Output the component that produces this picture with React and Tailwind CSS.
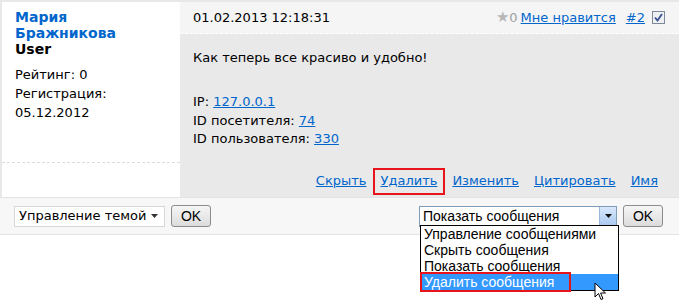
import React from "react";

const Link = ({ children, className = "" }) => (
  <a href="#" className={`text-[#0066cc] underline ${className}`}>
    {children}
  </a>
);

const App = () => {
  const options = [
    "Управление сообщениями",
    "Скрыть сообщения",
    "Показать сообщения",
    "Удалить сообщения",
  ];

  return (
    <div className="relative w-[679px] h-[301px] bg-white text-[13px] text-black font-['DejaVu_Sans',sans-serif] overflow-hidden">
      {/* Post */}
      <div className="flex h-[197px] border-t-2 border-l-2 border-[#e8e8e8]">
        {/* Author */}
        <div className="w-[178px] flex flex-col bg-white">
          <div className="h-[161px] border-b border-dashed border-[#dcdcdc] pl-[13px] pt-[7px]">
            <div className="text-[#0066cc] font-bold text-[14px] leading-[16px]">
              Мария
              <br />
              Бражникова
            </div>
            <div className="font-bold text-[14px] leading-[16px]">User</div>
            <div className="mt-[8px] leading-[19px]">
              <div>Рейтинг: 0</div>
              <div>Регистрация:</div>
              <div>05.12.2012</div>
            </div>
          </div>
        </div>

        {/* Message */}
        <div className="flex-1 flex flex-col">
          <div className="h-[32px] flex items-center bg-[#f5f5f5] border-b border-dashed border-white pl-[13px] pr-[14px]">
            <span className="flex-1">01.02.2013 12:18:31</span>
            <span className="text-[#b8b8b8] text-[15px] leading-none">★</span>
            <span className="text-[#a0a0a0]">0</span>
            <Link className="ml-[3px]">Мне нравится</Link>
            <Link className="ml-[10px]">#2</Link>
            <span className="ml-[7px] w-[13px] h-[13px] border border-[#7f8a99] bg-[#eef0f4] flex items-center justify-center">
              <svg width="9" height="9" viewBox="0 0 9 9">
                <path d="M1 4.5 L3.5 7.5 L8 1" fill="none" stroke="#3a4f8f" strokeWidth="1.8" />
              </svg>
            </span>
          </div>
          <div className="flex-1 bg-[#e9e9e9] pl-[13px] pr-[21px] pt-[15px] flex flex-col">
            <div className="leading-[18px]">Как теперь все красиво и удобно!</div>
            <div className="mt-[26px] leading-[18.5px]">
              <div>
                IP: <Link>127.0.0.1</Link>
              </div>
              <div>
                ID посетителя: <Link>74</Link>
              </div>
              <div>
                ID пользователя: <Link>330</Link>
              </div>
            </div>
            <div className="mt-auto mb-[3px] flex justify-end items-center h-[26px]">
              <Link>Скрыть</Link>
              <span className="ml-[6px] border-2 border-[#e8141c] px-[6px] h-[27px] flex items-center">
                <Link>Удалить</Link>
              </span>
              <Link className="ml-[7px]">Изменить</Link>
              <Link className="ml-[15px]">Цитировать</Link>
              <Link className="ml-[15px]">Имя</Link>
            </div>
          </div>
        </div>
      </div>

      {/* Moderation bar */}
      <div className="h-[38px] bg-[#f7f7f7] border-y border-[#e3e3e3] flex items-center pl-[14px] pr-[16px] font-['Liberation_Sans',sans-serif] text-[14px]">
        <div className="w-[151px] h-[21px] bg-white border border-[#d7d7d7] flex items-center pl-[4px] pr-[6px] font-['DejaVu_Sans',sans-serif] text-[13px]">
          <span className="flex-1">Управление темой</span>
          <svg width="7" height="4" viewBox="0 0 7 4">
            <path d="M0 0 H7 L3.5 4 Z" fill="#333" />
          </svg>
        </div>
        <button className="ml-[6px] w-[40px] h-[22px] border border-[#8c8c8c] rounded-[3px] bg-gradient-to-b from-[#f6f6f6] to-[#dcdcdc] text-[14px] leading-none">
          OK
        </button>
        <div className="flex-1" />
        <div className="w-[198px] h-[21px] bg-white border border-[#7f9db9] flex items-center">
          <span className="flex-1 pl-[3px]">Показать сообщения</span>
          <span className="w-[17px] h-[19px] bg-gradient-to-b from-[#d8e8fb] to-[#a9c8f0] border-l border-[#9ab6d9] flex items-center justify-center">
            <svg width="7" height="4" viewBox="0 0 7 4">
              <path d="M0 0 H7 L3.5 4 Z" fill="#111" />
            </svg>
          </span>
        </div>
        <button className="ml-[6px] w-[40px] h-[22px] border border-[#8c8c8c] rounded-[3px] bg-gradient-to-b from-[#f6f6f6] to-[#dcdcdc] text-[14px] leading-none">
          OK
        </button>
      </div>

      {/* Open dropdown list */}
      <div className="absolute left-[420px] top-[225px] w-[199px] bg-white border border-black font-['Liberation_Sans',sans-serif] text-[14px] leading-[16px]">
        {options.map((o, i) =>
          i === 3 ? (
            <div key={o} className="relative bg-[#3399ff] text-white pl-[3px] h-[16px]">
              {o}
              <span className="absolute -left-[1px] -top-[2px] w-[151px] h-[20px] border-2 border-[#e8141c]" />
            </div>
          ) : (
            <div key={o} className="pl-[3px] h-[16px]">
              {o}
            </div>
          )
        )}
      </div>

      {/* Mouse cursor */}
      <svg className="absolute left-[594px] top-[282px]" width="14" height="20" viewBox="0 0 14 20">
        <path d="M1 1 L1 15 L4.5 11.5 L7 17.5 L9 16.7 L6.6 11 L11.5 11 Z" fill="white" stroke="black" strokeWidth="1" strokeLinejoin="round" />
      </svg>
    </div>
  );
};

export default App;
